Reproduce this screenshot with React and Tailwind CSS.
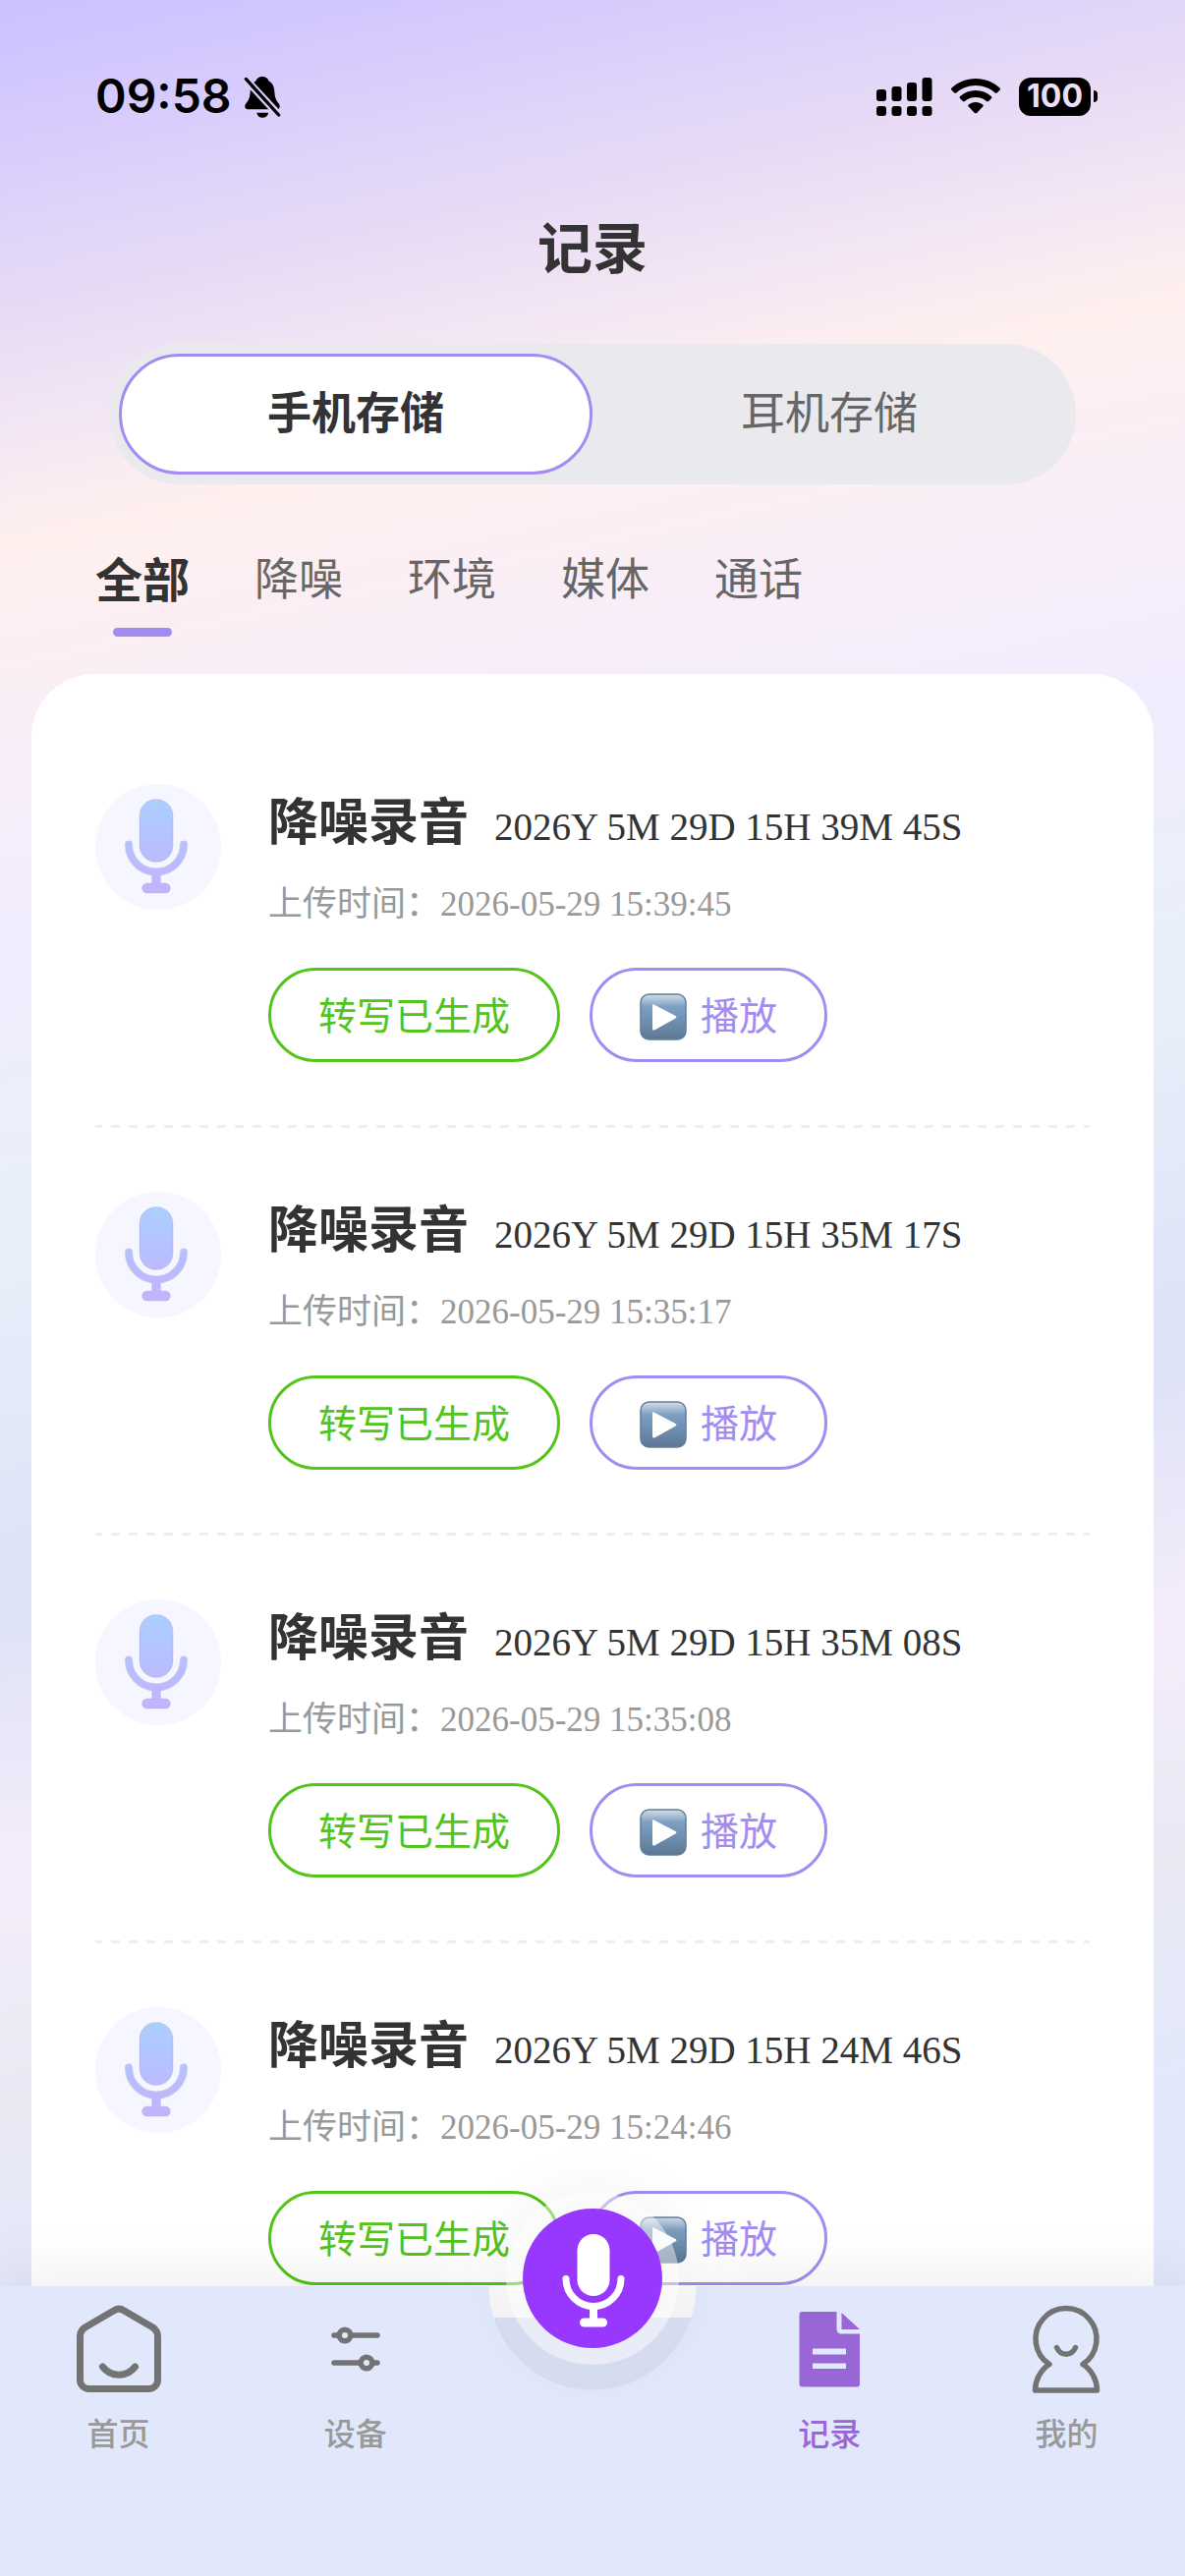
import { useState } from 'react';
import clsx from 'clsx';

const STORAGES = ['手机存储', '耳机存储'];
const FILTERS = ['全部', '降噪', '环境', '媒体', '通话'];

const RECORDS = [
  { id: 1, name: '降噪录音', stamp: '2026Y 5M 29D 15H 39M 45S', uploadedAt: '2026-05-29 15:39:45' },
  { id: 2, name: '降噪录音', stamp: '2026Y 5M 29D 15H 35M 17S', uploadedAt: '2026-05-29 15:35:17' },
  { id: 3, name: '降噪录音', stamp: '2026Y 5M 29D 15H 35M 08S', uploadedAt: '2026-05-29 15:35:08' },
  { id: 4, name: '降噪录音', stamp: '2026Y 5M 29D 15H 24M 46S', uploadedAt: '2026-05-29 15:24:46' },
];

function BellOffIcon() {
  return (
    <svg width="38" height="46" viewBox="0 0 40 46" aria-hidden="true">
      <path
        d="M20 2c-3.500 0-6 1.800-6.800 4.500C9 9 7.300 13 7 18c-.3 6-1.500 9-4.500 12.500C.5 33 1 37 4.500 37h31c3.500 0 4-4 2-6.500C34.500 27 33.300 24 33 18c-.3-5-2-9-6.200-11.500C26 3.800 23.500 2 20 2Z"
        fill="#000"
      />
      <path d="M14 40.500h12.500c-.6 3.500-3 5.500-6.300 5.500s-5.600-2-6.200-5.500Z" fill="#000" />
      <path d="M1 3.500 39 44.500" stroke="#d9cef9" strokeWidth="8" />
      <path d="M2.500 4.500 37.500 43" stroke="#000" strokeWidth="3.500" strokeLinecap="round" />
    </svg>
  );
}

function SignalIcon() {
  const bars = [
    [0, 12, 12],
    [15.5, 9, 15],
    [31, 5, 19],
    [46.5, 0, 24],
  ];
  return (
    <svg width="57" height="39" viewBox="0 0 57 39" aria-hidden="true">
      {bars.map(([x, y, h]) => (
        <g key={x}>
          <rect x={x} y={y} width="10" height={h} rx="3" />
          <rect x={x} y="29" width="10" height="10" rx="3" />
        </g>
      ))}
    </svg>
  );
}

function WifiIcon() {
  return (
    <svg width="50" height="36" viewBox="0 0 50 36" aria-hidden="true">
      <path d="M25 0C15.500 0 6.800 3.700.5 9.500c-.7.700-.7 1.500 0 2.200l2.700 2.700c.6.600 1.500.600 2.200 0C10.500 9.800 17.400 7 25 7s14.500 2.800 19.600 7.400c.7.600 1.600.600 2.200 0l2.700-2.700c.7-.7.700-1.500 0-2.200C43.200 3.700 34.500 0 25 0Z" />
      <path d="M25 12c-6.100 0-11.600 2.300-15.800 6-.7.700-.7 1.500-.1 2.200l2.800 2.800c.6.600 1.400.600 2.100 0 2.900-2.500 6.700-4 11-4s8.100 1.500 11 4c.7.600 1.500.600 2.100 0l2.800-2.800c.6-.7.600-1.500-.1-2.200C36.600 14.300 31.100 12 25 12Z" />
      <path d="M25 24c-2.800 0-5.300.9-7.200 2.500-.7.600-.7 1.500-.1 2.100l6.200 6.300c.7.600 1.500.600 2.200 0l6.200-6.300c.6-.6.600-1.500-.1-2.100C30.300 24.900 27.800 24 25 24Z" />
    </svg>
  );
}

function StatusBar() {
  return (
    <div className="flex h-[196px] items-center justify-between pr-[89px] pl-[97px] text-black">
      <div className="flex items-center gap-3">
        <span className="font-['Inter',sans-serif] text-[48px] leading-none font-semibold">09:58</span>
        <BellOffIcon />
      </div>
      <div className="flex items-center gap-[19px]">
        <SignalIcon />
        <WifiIcon />
        <div className="flex items-center gap-[3px]">
          <span className="flex h-[39px] w-[73px] items-center justify-center rounded-[12px] bg-black font-['Inter',sans-serif] text-[32px] leading-none font-bold text-[#ecdff8]">
            100
          </span>
          <span className="h-[12px] w-1 rounded-r-full bg-black" />
        </div>
      </div>
    </div>
  );
}

function MicShape({ fill, width = 7 }) {
  return (
    <g fill={fill}>
      <rect x="45.5" y="16" width="33" height="63" rx="16.5" />
      <path
        d="M34 61.500a28 28 0 0 0 56 0"
        fill="none"
        stroke={fill}
        strokeWidth={width}
        strokeLinecap="round"
      />
      <path d="M58 90h8v12h-8z" />
      <rect x="48" y="101.5" width="28" height="9" rx="4.500" />
    </g>
  );
}

function RecordBadge() {
  return (
    <span className="h-32 w-32 shrink-0 rounded-full bg-[#f5f6ff]">
      <svg viewBox="0 0 128 128" className="h-full w-full" aria-hidden="true">
        <defs>
          <linearGradient id="mic" gradientUnits="userSpaceOnUse" x1="0" y1="16" x2="0" y2="110">
            <stop offset="0" stopColor="#abcfff" />
            <stop offset="0.6" stopColor="#b9bdff" />
            <stop offset="1" stopColor="#c3b3ff" />
          </linearGradient>
        </defs>
        {/* Darker rim under the gradient fill */}
        <g stroke="#a3a6d8" strokeWidth="1.500" strokeOpacity="0.6">
          <MicShape fill="#a9a9d6" width={8} />
        </g>
        <MicShape fill="url(#mic)" width={6} />
      </svg>
    </span>
  );
}

function PlayIcon() {
  return (
    <svg width="48" height="48" viewBox="0 0 48 48" className="translate-y-1" aria-hidden="true">
      <defs>
        <linearGradient id="play" x1="0" y1="0" x2="0" y2="1">
          <stop offset="0" stopColor="#d3dfe9" />
          <stop offset="0.1" stopColor="#b4c8da" />
          <stop offset="0.28" stopColor="#7d9fc2" />
          <stop offset="0.6" stopColor="#6f8fb0" />
          <stop offset="1" stopColor="#5c7794" />
        </linearGradient>
      </defs>
      <rect x="1" y="1" width="46" height="46" rx="8.500" fill="url(#play)" stroke="#5f7f9c" strokeWidth="1.500" />
      <path d="M14.500 11.500 36.500 23c1.300.7 1.300 1.700 0 2.400L15.500 37.200c-1.300.7-2.500.2-2.500-1.200V12.200c0-.9.700-1.100 1.500-.7Z" fill="#fff" />
    </svg>
  );
}

function RecordRow({ record }) {
  return (
    <li>
      <div className="flex gap-12 pt-16 pb-16">
        <RecordBadge />
        <div className="min-w-0">
          <div className="flex h-[76px] items-baseline gap-[26px] leading-[70px] whitespace-nowrap text-[#333]">
            <h2 className="text-[51px] font-bold">{record.name}</h2>
            <span className="font-['Liberation_Serif',serif] text-[39px]">{record.stamp}</span>
          </div>
          <p className="mt-4 h-[60px] font-['Liberation_Serif','Noto_Sans_CJK_SC',serif] text-[35px] leading-[62px] text-[#999]">
            上传时间：{record.uploadedAt}
          </p>
          <div className="mt-[35px] flex gap-[30px] text-[39px]">
            <button className="h-24 rounded-full border-[3px] border-[#52c41a] px-12 pb-1 leading-none text-[#52c41a]">
              转写已生成
            </button>
            <button className="flex h-24 items-center gap-[14px] rounded-full border-[3px] border-[#a28cf1] px-12 pb-1 leading-none text-[#a28cf1]">
              <PlayIcon />
              播放
            </button>
          </div>
        </div>
      </div>
      {/* Dashed divider, 9px on / 9px off */}
      <div className="mb-px h-[3px] bg-[repeating-linear-gradient(90deg,#eee_0_7px,transparent_7px_16px,#eee_16px_18px)]" />
    </li>
  );
}

function HomeIcon() {
  return (
    <svg viewBox="0 0 96 96" className="h-24 w-24" fill="none" stroke="#737373" strokeWidth="7" strokeLinecap="round" strokeLinejoin="round" aria-hidden="true">
      <path d="M8.500 35c0-4 2-7 5-9L43 8.800c3-2 7-2 10 0L82.500 26c3 2 5 5 5 9v44.500c0 5-4 9-9 9h-61c-5 0-9-4-9-9Z" />
      <path d="M31.500 66c8.500 11 24.500 11 33 0" />
    </svg>
  );
}

function DeviceIcon() {
  return (
    <svg viewBox="0 0 96 96" className="h-24 w-24" fill="none" stroke="#737373" strokeWidth="5.500" strokeLinecap="round" aria-hidden="true">
      <path d="M26 34h5M44 34h26M26 62h26M65 62h5" />
      <circle cx="37" cy="34" r="5.800" />
      <circle cx="59" cy="62" r="5.800" />
    </svg>
  );
}

function RecordIcon() {
  return (
    <svg viewBox="0 0 96 96" className="h-24 w-24" fill="#9966d6" aria-hidden="true">
      <path
        fillRule="evenodd"
        d="M20.500 10H55.500v17.500c0 3 2 5 5 5H79V83.500a3 3 0 0 1-3 3H20.500a3 3 0 0 1-3-3V13a3 3 0 0 1 3-3ZM31 47.500v6h34v-6ZM31 62.500v5.500h34v-5.500Z"
      />
      <path d="M60.500 11v17H79Z" />
    </svg>
  );
}

function ProfileIcon() {
  return (
    <svg viewBox="0 0 96 96" className="h-24 w-24" fill="none" stroke="#737373" strokeWidth="5.500" strokeLinecap="round" strokeLinejoin="round" aria-hidden="true">
      <path d="M31 63.500a31 31 0 1 1 34 0C74 69 79.500 80 79.500 90h-63C16.500 80 22 69 31 63.500Z" />
      <path d="M38.500 46.500c4 9 15 9 19 0" />
    </svg>
  );
}

const NAV_LEFT = [
  { label: '首页', Icon: HomeIcon },
  { label: '设备', Icon: DeviceIcon },
];
const NAV_RIGHT = [
  { label: '记录', Icon: RecordIcon, active: true },
  { label: '我的', Icon: ProfileIcon },
];

function NavItem({ label, Icon, active }) {
  return (
    <a
      href="#"
      className={clsx(
        'flex flex-1 flex-col items-center pt-4 text-[32px] leading-[48px] font-medium',
        active ? 'text-[#9966d6]' : 'text-[#999]'
      )}
    >
      <Icon />
      <span className="mt-3">{label}</span>
    </a>
  );
}

function BottomNav() {
  return (
    <nav className="absolute inset-x-0 bottom-0 h-[295px]">
      {/* Bar with a round notch cut out under the record button */}
      <div className="absolute inset-0 drop-shadow-[0_-8px_30px_rgba(0,0,0,0.07)]">
        <div className="h-full bg-[radial-gradient(circle_at_50%_0,transparent_105px,#e2e8fc_106px)]" />
      </div>
      <div className="relative flex h-full">
        {NAV_LEFT.map((item) => (
          <NavItem key={item.label} {...item} />
        ))}
        <div className="flex flex-1 justify-center">
          <div className="-mt-24 flex h-44 w-44 shrink-0 items-center justify-center rounded-full bg-white/45 drop-shadow-[0_0_30px_rgba(0,0,0,0.08)]">
            <button aria-label="录音" className="flex h-[142px] w-[142px] items-center justify-center rounded-full bg-[#9838ff]">
              <svg viewBox="-3 -3 128 128" className="h-32 w-32" aria-hidden="true">
                <MicShape fill="#fff" />
              </svg>
            </button>
          </div>
        </div>
        {NAV_RIGHT.map((item) => (
          <NavItem key={item.label} {...item} />
        ))}
      </div>
    </nav>
  );
}

export default function App() {
  const [storage, setStorage] = useState(STORAGES[0]);
  const [filter, setFilter] = useState(FILTERS[0]);

  return (
    <div className="relative flex h-screen flex-col overflow-hidden bg-[linear-gradient(168deg,#cbc2ff_0%,#d7cbfd_4.7%,#e1d7f8_9%,#e8daf5_11%,#f3e6f4_15.2%,#fff0ee_19.4%,#faeef6_24.8%,#f5edfc_30.4%,#f1ecfe_32.8%,#e8f0fa_43.7%,#dde2f6_56.5%,#f5edfb_66.5%,#e8e8f3_75%,#e2e8fc_83.5%)] font-['Noto_Sans_CJK_SC',sans-serif]">
      <StatusBar />
      <h1 className="mb-12 text-center text-[56px] leading-[106px] font-bold text-[#333]">记录</h1>

      {/* Storage switch */}
      <div className="mx-[111px] flex h-[143px] shrink-0 rounded-full bg-[#e9e9ee] p-[10px]">
        {STORAGES.map((name) => (
          <button
            key={name}
            onClick={() => setStorage(name)}
            className={clsx(
              'flex-1 rounded-full border-[3px] pb-2 text-[45px] leading-none',
              name === storage
                ? 'border-[#a28cf1] bg-white font-bold text-[#333]'
                : 'border-transparent text-[#666]'
            )}
          >
            {name}
          </button>
        ))}
      </div>

      {/* Filter tabs */}
      <div className="mt-[50px] mb-[38px] flex shrink-0 gap-[66px] px-[97px]">
        {FILTERS.map((name) => (
          <button key={name} onClick={() => setFilter(name)} className="flex flex-col items-center gap-2">
            <span
              className={clsx(
                'leading-[88px]',
                name === filter ? 'text-[48px] font-bold text-[#333]' : 'text-[45px] text-[#666]'
              )}
            >
              {name}
            </span>
            <span className={clsx('h-[9px] w-[60px] rounded-full', name === filter && 'bg-[#a28cf1]')} />
          </button>
        ))}
      </div>

      {/* Recordings */}
      <main className="mx-8 mb-[263px] min-h-0 flex-1 overflow-hidden rounded-t-[64px] bg-white px-[65px] pt-12">
        <ul>
          {RECORDS.map((record) => (
            <RecordRow key={record.id} record={record} />
          ))}
        </ul>
      </main>

      <BottomNav />
    </div>
  );
}
